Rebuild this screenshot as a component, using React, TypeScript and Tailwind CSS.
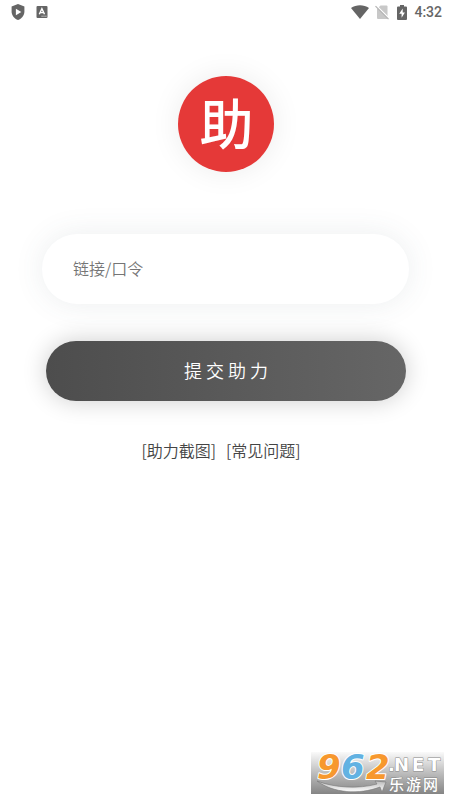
function ShieldIcon() {
  return (
    <svg className="h-4 w-4" viewBox="0 0 16 16" aria-hidden="true">
      <path d="M8 0 14.4 2.6V7.500C14.4 11.500 11.700 14.700 8 16 4.300 14.700 1.600 11.500 1.600 7.500V2.600Z" fill="#656565" />
      <path d="M5.900 4.700 11.300 8 5.900 11.300Z" fill="#fff" />
    </svg>
  );
}

function KeyboardIcon() {
  return (
    <svg className="h-3 w-3" viewBox="0 0 12 12" aria-hidden="true">
      <rect x="0.500" width="11" height="12" rx="1" fill="#656565" />
      <path d="M3.300 8.200 5.900 2.600 8.500 8.200M4.200 6.600H7.600" fill="none" stroke="#fff" strokeWidth="1.400" />
      <path d="M5.500 10.200H10.500" stroke="#ddd" strokeWidth="1" strokeDasharray="1.200 0.700" />
    </svg>
  );
}

function WifiIcon() {
  return (
    <svg className="h-[14px] w-[18px]" viewBox="0 0 18 14" aria-hidden="true">
      <path d="M0 3C5.200-.8 12.800-.8 18 3L9 14Z" fill="#656565" />
    </svg>
  );
}

function NoSimIcon() {
  return (
    <svg className="h-[15px] w-[14px]" viewBox="0 0 14 15" aria-hidden="true">
      <path d="M5.500.5H11.500Q12.500.5 12.500 1.500V14H3Q2 14 2 13V4Z" fill="#c8c8c8" />
      <path d="M1.200.5 14.200 13.500" stroke="#fff" strokeWidth="1.400" />
      <path d="M.5 1.200 13.500 14.200" stroke="#b4b4b4" strokeWidth="1.200" />
    </svg>
  );
}

function BatteryIcon() {
  return (
    <svg className="h-[15px] w-[10px]" viewBox="0 0 10 15" aria-hidden="true">
      <path d="M3 0H7V1.500H9Q10 1.500 10 2.500V14Q10 15 9 15H1Q0 15 0 14V2.500Q0 1.500 1 1.500H3Z" fill="#656565" />
      <path d="M5.700 3.500 2.200 8.800H4.600V12.800L7.900 7.400H5.700Z" fill="#fff" />
    </svg>
  );
}

function StatusBar() {
  return (
    <header className="flex h-6 items-center justify-between pr-2 pl-[10px]">
      <div className="flex items-center gap-[10px]">
        <ShieldIcon />
        <KeyboardIcon />
      </div>
      <div className="flex items-center">
        <WifiIcon />
        <span className="ml-[6px]">
          <NoSimIcon />
        </span>
        <span className="ml-2">
          <BatteryIcon />
        </span>
        <span className="ml-[7px] font-[Roboto,sans-serif] text-sm font-medium text-[#666]">4:32</span>
      </div>
    </header>
  );
}

function SiteBadge() {
  return (
    <svg className="h-[42px] w-[133px] overflow-visible" viewBox="0 0 133 42" role="img" aria-label="962.NET 乐游网">
      <defs>
        <linearGradient id="badge-bg" x1="0" y1="0" x2="0" y2="1">
          <stop offset="0" stopColor="#fafafa" />
          <stop offset="0.500" stopColor="#bdbdbd" />
          <stop offset="1" stopColor="#858585" />
        </linearGradient>
        <linearGradient id="badge-swoosh" x1="0" y1="0" x2="0" y2="1">
          <stop offset="0" stopColor="#bbb" />
          <stop offset="1" stopColor="#fff" />
        </linearGradient>
      </defs>
      <rect width="133" height="42" fill="url(#badge-bg)" />
      <path
        d="M6 29C24 36 48 37 66 32L64 29 75 30 71 40 69 35C48 43 22 41 6 29Z"
        fill="url(#badge-swoosh)"
        stroke="#777"
        strokeWidth="0.600"
      />
      <g
        className="font-['DejaVu_Sans',sans-serif] text-[34px] font-bold italic"
        stroke="#fff"
        strokeWidth="2"
        strokeLinejoin="round"
        paintOrder="stroke"
      >
        <text x="6" y="27" fill="#f7982e">9</text>
        <text x="30" y="27" fill="#62b2e2">6</text>
        <text x="55" y="27" fill="#f7982e">2</text>
      </g>
      <g fill="#fff" stroke="#888" strokeWidth="1" strokeLinejoin="round" paintOrder="stroke">
        <g className="font-['DejaVu_Sans',sans-serif] text-[18px] font-bold">
          <text x="77" y="19">.</text>
          <text x="83" y="19">N</text>
          <text x="101" y="19">E</text>
          <text x="117" y="19">T</text>
        </g>
        <g className="font-['Noto_Sans_CJK_SC',sans-serif] text-[15px] font-medium">
          <text x="78" y="38">乐</text>
          <text x="95" y="38">游</text>
          <text x="112" y="38">网</text>
        </g>
      </g>
    </svg>
  );
}

export default function App() {
  return (
    <div className="flex min-h-screen flex-col bg-white font-['Noto_Sans_CJK_SC',sans-serif] font-[350]">
      <StatusBar />
      <main className="flex flex-col pt-[52px] pr-[41px] pl-[42px]">
        <div className="flex h-24 w-24 items-center justify-center self-center rounded-full bg-[#e53938] pb-1 pl-[2px] text-[54px] leading-none font-medium text-white shadow-[0_0_30px_rgba(0,0,0,0.08)]">
          助
        </div>
        <form className="mt-[62px] flex flex-col" onSubmit={(e) => e.preventDefault()}>
          <input
            type="text"
            aria-label="链接/口令"
            placeholder="链接/口令"
            className="h-[70px] w-full rounded-full bg-white px-[31px] pb-[2px] text-base text-[#444] shadow-[0_0_30px_rgba(69,90,100,0.1)] outline-none placeholder:text-[#757575]"
          />
          <button
            type="submit"
            className="mr-[3px] ml-1 mt-[37px] h-[60px] rounded-full bg-linear-to-r from-[#4d4d4d] to-[#666] pb-[2px] text-lg text-white shadow-[0_0_25px_rgba(0,0,0,0.2)]"
          >
            提 交 助 力
          </button>
        </form>
        <nav className="mt-[37px] flex justify-center gap-[10px] pr-[9px] text-base text-[#444]">
          <a href="#screenshots">[助力截图]</a>
          <a href="#faq">[常见问题]</a>
        </nav>
      </main>
      <footer className="mt-auto flex justify-end pr-[6px] pb-[6px]">
        <SiteBadge />
      </footer>
    </div>
  );
}
